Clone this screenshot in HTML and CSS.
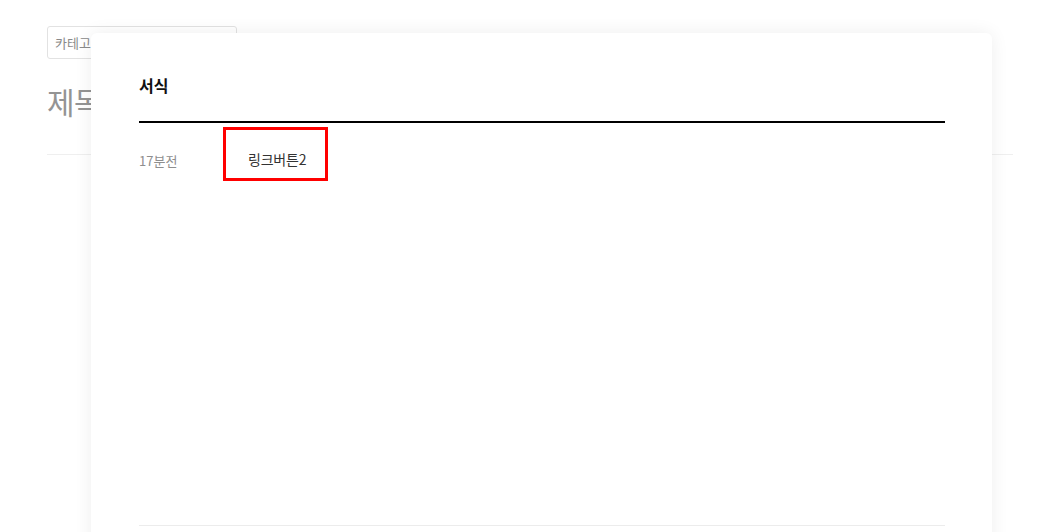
FILE: index.html
```html
<!DOCTYPE html>
<html lang="ko">
<head>
<meta charset="utf-8">
<link rel="stylesheet" href="styles.css">
</head>
<body>
<div class="page">
  <div class="select">카테고리 선택</div>
  <h1 class="title">제목을 입력하세요</h1>
  <div class="divider"></div>
</div>
<div class="modal">
  <h2 class="modal-title">서식</h2>
  <div class="modal-rule"></div>
  <div class="row">
    <span class="time">17분전</span>
    <a class="link-btn">링크버튼2</a>
  </div>
  <div class="spacer"></div>
  <div class="modal-foot"></div>
</div>
</body>
</html>
```
FILE: styles.css
```css
html, body {
  margin: 0;
  padding: 0;
  background: #fff;
  font-family: "Noto Sans CJK KR", "Noto Sans", sans-serif;
  overflow: hidden;
  height: 532px;
}
.page {
  padding: 26px 46px 0 47px;
}
.select {
  width: 190px;
  height: 33px;
  box-sizing: border-box;
  border: 1px solid #e2e2e2;
  border-radius: 3px;
  font-size: 13px;
  line-height: 31px;
  padding-left: 7px;
  color: #8a8a8a;
}
.title {
  margin: 22px 0 0;
  font-size: 30px;
  font-weight: 400;
  line-height: 40px;
  height: 40px;
  color: #949494;
  letter-spacing: -0.5px;
}
.divider {
  margin-top: 33px;
  height: 1px;
  background: #efefef;
}
.modal {
  position: absolute;
  left: 91px;
  top: 33px;
  width: 901px;
  height: 520px;
  box-sizing: border-box;
  padding: 0 47px 0 48px;
  background: #fff;
  border-radius: 6px;
  box-shadow: 0 0 18px rgba(0, 0, 0, 0.07);
  display: flex;
  flex-direction: column;
}
.modal-title {
  margin: 40px 0 0;
  font-size: 16px;
  font-weight: 700;
  line-height: 24px;
  color: #111;
}
.modal-rule {
  margin-top: 24px;
  height: 2px;
  background: #000;
}
.row {
  display: flex;
  align-items: center;
  margin-top: 4px;
}
.time {
  width: 84px;
  font-size: 13px;
  color: #8e8e8e;
  padding-top: 12px;
}
.link-btn {
  box-sizing: border-box;
  width: 105px;
  height: 54px;
  border: 3px solid #ff0000;
  padding: 9px 0 0 22px;
  display: flex;
  align-items: center;
  font-size: 14px;
  color: #333;
  letter-spacing: -0.2px;
}
.spacer {
  flex: 1;
}
.modal-foot {
  height: 1px;
  background: #ececec;
  margin-bottom: 27px;
}
```
